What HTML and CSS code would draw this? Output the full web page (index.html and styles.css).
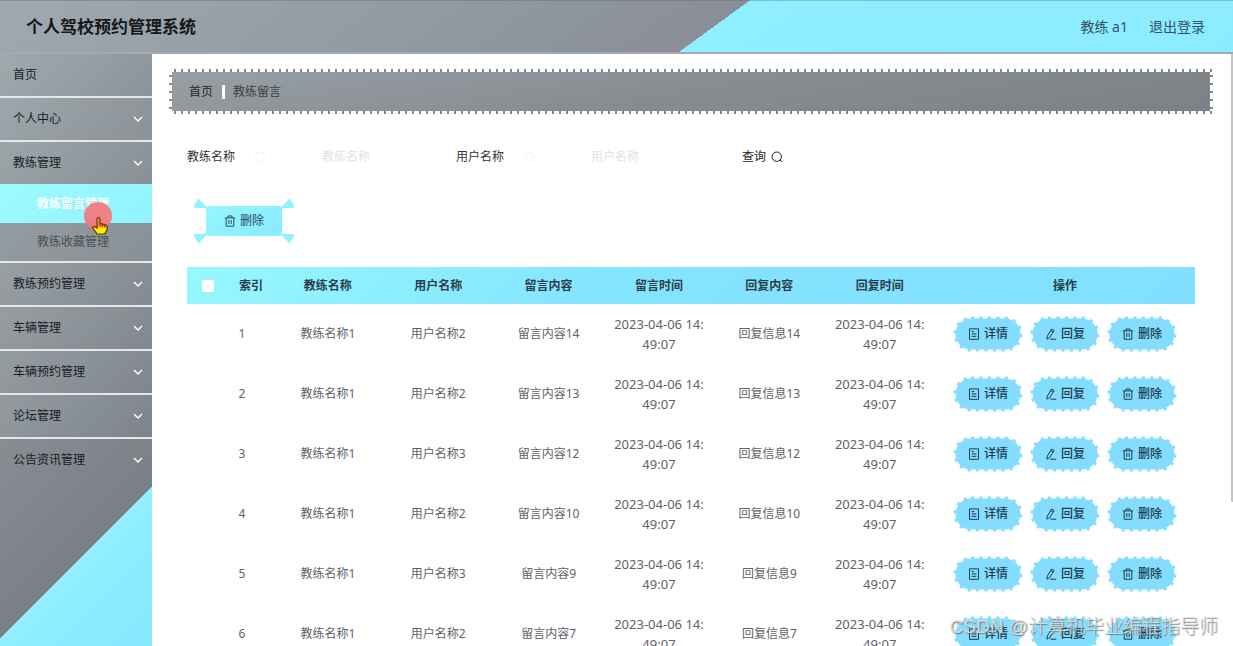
FILE: index.html
```html
<!DOCTYPE html>
<html lang="zh-CN">
<head>
<meta charset="utf-8">
<title>个人驾校预约管理系统</title>
<link rel="stylesheet" href="styles.css">
</head>
<body>
<svg class="sprite" aria-hidden="true">
  <symbol id="i-down" viewBox="0 0 10 6"><path d="M1 1l4 4 4-4" fill="none" stroke="#fff" stroke-width="1.4"/></symbol>
  <symbol id="i-doc" viewBox="0 0 12 12"><path d="M1.5.9h9v10.4h-9zM3.6 3.6h2.6M3.6 5.9h4.8M3.6 8.3h4.8" fill="none" stroke="currentColor"/></symbol>
  <symbol id="i-edit" viewBox="0 0 12 12"><path d="M6.6 1l2.5 1.4-4.3 7.2-2.9 1.5.4-3zM5.7 2.6l2.4 1.5M5.5 11.2h5.8" fill="none" stroke="currentColor"/></symbol>
  <symbol id="i-trash" viewBox="0 0 12 12"><path d="M.8 2.9h10.4M2.2 3v8.2h7.6V3M4 2.8V1h4v1.800M4.800 5v4M7.200 5v4" fill="none" stroke="currentColor"/></symbol>
  <symbol id="i-search" viewBox="0 0 12 12"><circle cx="5.700" cy="5.700" r="4.700" fill="none" stroke="currentColor"/><path d="M9 9l2 2" stroke="currentColor"/></symbol>
  <symbol id="i-edge" viewBox="0 0 70 36"><rect x="2.500" y="2.500" width="65" height="31" rx="15.500" fill="#84dcff"/><rect x="2" y="2" width="66" height="32" rx="16" fill="none" stroke="#84dcff" stroke-width="3" stroke-dasharray="3 5.450"/></symbol>
</svg>
<div class="app">
  <header class="topbar">
    <h1 class="brand">个人驾校预约管理系统</h1>
    <nav class="account"><span>教练 a1</span><a href="#">退出登录</a></nav>
  </header>
  <div class="body">
    <nav class="sidebar">
      <ul class="menu">
        <li class="entry"><a class="entry-title" href="#">首页</a></li>
        <li class="entry"><a class="entry-title" href="#">个人中心<svg class="chev"><use href="#i-down"/></svg></a></li>
        <li class="entry"><a class="entry-title" href="#">教练管理<svg class="chev"><use href="#i-down"/></svg></a>
          <ul class="submenu">
            <li><a class="sub active" href="#">教练留言管理</a></li>
            <li><a class="sub" href="#">教练收藏管理</a></li>
          </ul>
        </li>
        <li class="entry"><a class="entry-title" href="#">教练预约管理<svg class="chev"><use href="#i-down"/></svg></a></li>
        <li class="entry"><a class="entry-title" href="#">车辆管理<svg class="chev"><use href="#i-down"/></svg></a></li>
        <li class="entry"><a class="entry-title" href="#">车辆预约管理<svg class="chev"><use href="#i-down"/></svg></a></li>
        <li class="entry"><a class="entry-title" href="#">论坛管理<svg class="chev"><use href="#i-down"/></svg></a></li>
        <li class="entry last"><a class="entry-title" href="#">公告资讯管理<svg class="chev"><use href="#i-down"/></svg></a></li>
      </ul>
    </nav>
    <main class="main">
      <div class="crumbs"><a href="#">首页</a><span class="bar"></span><span class="here">教练留言</span></div>
      <form class="filters">
        <div class="field"><label for="coach">教练名称</label><span class="ring"></span><input id="coach" type="text" placeholder="教练名称"></div>
        <div class="field"><label for="user">用户名称</label><span class="ring"></span><input id="user" type="text" placeholder="用户名称"></div>
        <button class="search" type="button">查询<svg class="icon"><use href="#i-search"/></svg></button>
      </form>
      <button class="remove" type="button">
        <svg class="rays" viewBox="0 0 100 44" aria-hidden="true"><path d="M13 9L4.500 0 0 8zM87 9l8.500-9L100 8zM13 35L4.500 44 0 36zM87 35l8.500 9L100 36z" fill="#8cf3ff" stroke="#8cf3ff"/></svg>
        <svg class="icon"><use href="#i-trash"/></svg>删除
      </button>
      <table class="grid">
        <colgroup><col class="c-check"><col class="c-index"><col class="c-text"><col class="c-text"><col class="c-text"><col class="c-text"><col class="c-text"><col class="c-text"><col class="c-ops"></colgroup>
        <thead><tr><th><input class="tick" type="checkbox" aria-label="全选"></th><th>索引</th><th>教练名称</th><th>用户名称</th><th>留言内容</th><th>留言时间</th><th>回复内容</th><th>回复时间</th><th>操作</th></tr></thead>
        <tbody>
          <tr><td></td><td class="num">1</td><td>教练名称1</td><td>用户名称2</td><td>留言内容14</td><td class="time">2023-04-06 14:<br>49:07</td><td>回复信息14</td><td class="time">2023-04-06 14:<br>49:07</td>
            <td><div class="ops"><button class="pill" type="button"><svg class="edge"><use href="#i-edge"/></svg><svg class="icon"><use href="#i-doc"/></svg><span>详情</span></button><button class="pill" type="button"><svg class="edge"><use href="#i-edge"/></svg><svg class="icon"><use href="#i-edit"/></svg><span>回复</span></button><button class="pill" type="button"><svg class="edge"><use href="#i-edge"/></svg><svg class="icon"><use href="#i-trash"/></svg><span>删除</span></button></div></td></tr>
          <tr><td></td><td class="num">2</td><td>教练名称1</td><td>用户名称2</td><td>留言内容13</td><td class="time">2023-04-06 14:<br>49:07</td><td>回复信息13</td><td class="time">2023-04-06 14:<br>49:07</td>
            <td><div class="ops"><button class="pill" type="button"><svg class="edge"><use href="#i-edge"/></svg><svg class="icon"><use href="#i-doc"/></svg><span>详情</span></button><button class="pill" type="button"><svg class="edge"><use href="#i-edge"/></svg><svg class="icon"><use href="#i-edit"/></svg><span>回复</span></button><button class="pill" type="button"><svg class="edge"><use href="#i-edge"/></svg><svg class="icon"><use href="#i-trash"/></svg><span>删除</span></button></div></td></tr>
          <tr><td></td><td class="num">3</td><td>教练名称1</td><td>用户名称3</td><td>留言内容12</td><td class="time">2023-04-06 14:<br>49:07</td><td>回复信息12</td><td class="time">2023-04-06 14:<br>49:07</td>
            <td><div class="ops"><button class="pill" type="button"><svg class="edge"><use href="#i-edge"/></svg><svg class="icon"><use href="#i-doc"/></svg><span>详情</span></button><button class="pill" type="button"><svg class="edge"><use href="#i-edge"/></svg><svg class="icon"><use href="#i-edit"/></svg><span>回复</span></button><button class="pill" type="button"><svg class="edge"><use href="#i-edge"/></svg><svg class="icon"><use href="#i-trash"/></svg><span>删除</span></button></div></td></tr>
          <tr><td></td><td class="num">4</td><td>教练名称1</td><td>用户名称2</td><td>留言内容10</td><td class="time">2023-04-06 14:<br>49:07</td><td>回复信息10</td><td class="time">2023-04-06 14:<br>49:07</td>
            <td><div class="ops"><button class="pill" type="button"><svg class="edge"><use href="#i-edge"/></svg><svg class="icon"><use href="#i-doc"/></svg><span>详情</span></button><button class="pill" type="button"><svg class="edge"><use href="#i-edge"/></svg><svg class="icon"><use href="#i-edit"/></svg><span>回复</span></button><button class="pill" type="button"><svg class="edge"><use href="#i-edge"/></svg><svg class="icon"><use href="#i-trash"/></svg><span>删除</span></button></div></td></tr>
          <tr><td></td><td class="num">5</td><td>教练名称1</td><td>用户名称3</td><td>留言内容9</td><td class="time">2023-04-06 14:<br>49:07</td><td>回复信息9</td><td class="time">2023-04-06 14:<br>49:07</td>
            <td><div class="ops"><button class="pill" type="button"><svg class="edge"><use href="#i-edge"/></svg><svg class="icon"><use href="#i-doc"/></svg><span>详情</span></button><button class="pill" type="button"><svg class="edge"><use href="#i-edge"/></svg><svg class="icon"><use href="#i-edit"/></svg><span>回复</span></button><button class="pill" type="button"><svg class="edge"><use href="#i-edge"/></svg><svg class="icon"><use href="#i-trash"/></svg><span>删除</span></button></div></td></tr>
          <tr><td></td><td class="num">6</td><td>教练名称1</td><td>用户名称2</td><td>留言内容7</td><td class="time">2023-04-06 14:<br>49:07</td><td>回复信息7</td><td class="time">2023-04-06 14:<br>49:07</td>
            <td><div class="ops"><button class="pill" type="button"><svg class="edge"><use href="#i-edge"/></svg><svg class="icon"><use href="#i-doc"/></svg><span>详情</span></button><button class="pill" type="button"><svg class="edge"><use href="#i-edge"/></svg><svg class="icon"><use href="#i-edit"/></svg><span>回复</span></button><button class="pill" type="button"><svg class="edge"><use href="#i-edge"/></svg><svg class="icon"><use href="#i-trash"/></svg><span>删除</span></button></div></td></tr>
        </tbody>
      </table>
    </main>
  </div>
  <div class="scroll-thumb"></div>
  <svg class="pointer" viewBox="0 0 28 36" aria-hidden="true">
    <defs><linearGradient id="hand" x1="0" y1="0" x2="0" y2="1"><stop offset=".5" stop-color="#f58a3c"/><stop offset=".7" stop-color="#fff200"/></linearGradient></defs>
    <circle cx="14" cy="14" r="14" fill="#f4767c" fill-opacity=".92"/>
    <path d="M13 17c0-2 3-2 3 0v4.500l5 1c1.500.500 2.500 1.500 2.500 3-.200 3-1.500 4.500-3 6.500h-7.500c-1.500-2.500-3.500-4-4.500-6.500 1-1.500 3-1 4.500.500z" fill="url(#hand)" stroke="#6b3408" stroke-width="1.200"/>
    <path d="M16 21.500v3M18.500 22v3M21 22.500v3" stroke="#6b3408"/>
  </svg>
  <div class="watermark">CSDN @计算机毕业编程指导师</div>
</div>
</body>
</html>
```
FILE: styles.css
```css
* { box-sizing: border-box; }
body {
  margin: 0;
  font-family: "Noto Sans", "Noto Sans CJK SC", sans-serif;
  font-size: 12px;
  line-height: 20px;
  color: #333;
  background: #fff;
}
ul { list-style: none; margin: 0; padding: 0; }
a { color: inherit; text-decoration: none; }
button, input { font: inherit; color: inherit; border: 0; background: none; padding: 0; margin: 0; }
.sprite { position: absolute; width: 0; height: 0; }
.icon { width: 12px; height: 12px; flex: none; }

.app { position: relative; height: 100vh; overflow: hidden; display: flex; flex-direction: column; }

.topbar {
  display: flex;
  align-items: center;
  justify-content: space-between;
  flex: none;
  height: 54px;
  padding: 0 28px 0 26px;
  border-top: 1px solid rgba(80, 90, 110, .3);
  border-bottom: 2px solid #a3abb0;
  background: linear-gradient(144deg, #9fa9af 0%, #8a8f97 57.4%, #8feeff 57.4%, #8cebff 100%) border-box;
}
.brand { margin: 0; font-size: 17px; line-height: 24px; font-weight: 700; color: #15181a; }
.account { display: flex; gap: 21px; font-size: 14px; color: #2f5566; }

.body { flex: 1; min-height: 0; display: flex; }
.sidebar {
  flex: none;
  width: 152px;
  overflow: hidden;
  background: linear-gradient(135deg, #9ea7ac 0%, #7b8087 78.6%, #90f0ff 78.6%, #86e6ff 100%);
}
.entry { border-bottom: 2px solid #e4e8ea; }
.entry.last { border-bottom: 0; }
.entry-title {
  display: flex;
  align-items: center;
  justify-content: space-between;
  height: 42px;
  padding: 0 9px 0 13px;
  color: #181c1f;
  background: linear-gradient(135deg, rgba(160, 170, 176, .4), rgba(125, 131, 138, .3));
}
.entry.last .entry-title { background: none; }
.chev { width: 10px; height: 6px; }
.sub { display: block; padding: 9px 0 9px 37px; color: #4a4f53; }
.sub.active { padding-top: 10px; color: #fff; font-weight: 700; background: linear-gradient(135deg, #9cfbff, #92f2ff); }

.main { flex: 1; min-width: 0; padding: 15px 20px 0 17px; }
.crumbs {
  display: flex;
  align-items: center;
  height: 45px;
  padding: 0 20px;
  color: #24282b;
  background:
    repeating-linear-gradient(90deg, transparent 0 5px, #85898c 5px 7px) 0 0 / 100% 3px no-repeat,
    repeating-linear-gradient(90deg, transparent 0 5px, #85898c 5px 7px) 0 100% / 100% 3px no-repeat,
    repeating-linear-gradient(180deg, transparent 0 6px, #85898c 6px 8px) 0 0 / 3px 100% no-repeat,
    repeating-linear-gradient(180deg, transparent 0 6px, #85898c 6px 8px) 100% 0 / 3px 100% no-repeat,
    linear-gradient(170deg, #979fa5, #878c90 50%, #7b8186) 3px 3px / calc(100% - 6px) calc(100% - 6px) no-repeat;
}
.bar { width: 3px; height: 14px; margin: 0 8px 0 9px; background: #fff; }
.here { color: #3c4145; }

.filters { display: flex; align-items: center; padding: 33px 0 0 18px; }
.field { display: flex; align-items: center; width: 269px; }
.ring { width: 10px; height: 10px; margin: 0 57px 0 20px; border: 1px solid #f4f4f4; border-radius: 50%; }
.field input { width: 100px; height: 20px; }
.field input::placeholder { color: #e2e2e2; opacity: 1; }
.search { display: flex; align-items: center; gap: 5px; margin-left: 17px; color: #222; }

.remove {
  position: relative;
  display: flex;
  align-items: center;
  justify-content: center;
  gap: 4px;
  width: 76px;
  height: 30px;
  margin: 39px 0 0 37px;
  border-radius: 3px;
  background: linear-gradient(135deg, #94f6ff, #8aeaff);
  color: #284a63;
}
.rays { position: absolute; left: -12px; top: -7px; width: 100px; height: 44px; overflow: visible; }

.grid { width: calc(100% - 36px); margin: 31px 0 0 18px; table-layout: fixed; border-collapse: collapse; text-align: center; }
.c-check { width: 4.2%; }
.c-index { width: 4.3%; }
.c-text { width: 10.95%; }
.c-ops { width: 25.8%; }
.grid thead { background: linear-gradient(135deg, #98f8ff 0%, #84e5ff 40%, #82dfff 100%); }
.grid th { height: 37px; padding: 0; font-weight: 700; color: #2b3d49; }
.grid td { padding: 10px 0; color: #606266; }
.grid .num { padding-right: 18px; }
.grid .time { font-size: 13px; }
.tick { appearance: none; display: block; width: 12px; height: 12px; margin: 0 auto; border-radius: 2px; background: #fff; }
.ops { display: flex; justify-content: center; gap: 7px; }
.pill {
  position: relative;
  display: flex;
  align-items: center;
  justify-content: center;
  gap: 4px;
  width: 70px;
  height: 36px;
  color: #1c3c50;
  font-weight: 500;
}
.pill .icon, .pill span { position: relative; }
.edge { position: absolute; left: 0; top: 0; width: 100%; height: 100%; }

.scroll-thumb { position: absolute; right: 0; top: 54px; width: 2px; height: 448px; background: #c4c4c4; }
.pointer { position: absolute; left: 84px; top: 202px; width: 28px; height: 36px; }
.watermark {
  position: absolute;
  right: 15px;
  bottom: 7px;
  font-family: "Liberation Sans", "Noto Sans CJK SC", sans-serif;
  font-size: 19px;
  line-height: 24px;
  font-weight: 300;
  color: rgba(225, 225, 225, .9);
  text-shadow: 1px 1px 1px #777;
}
```
